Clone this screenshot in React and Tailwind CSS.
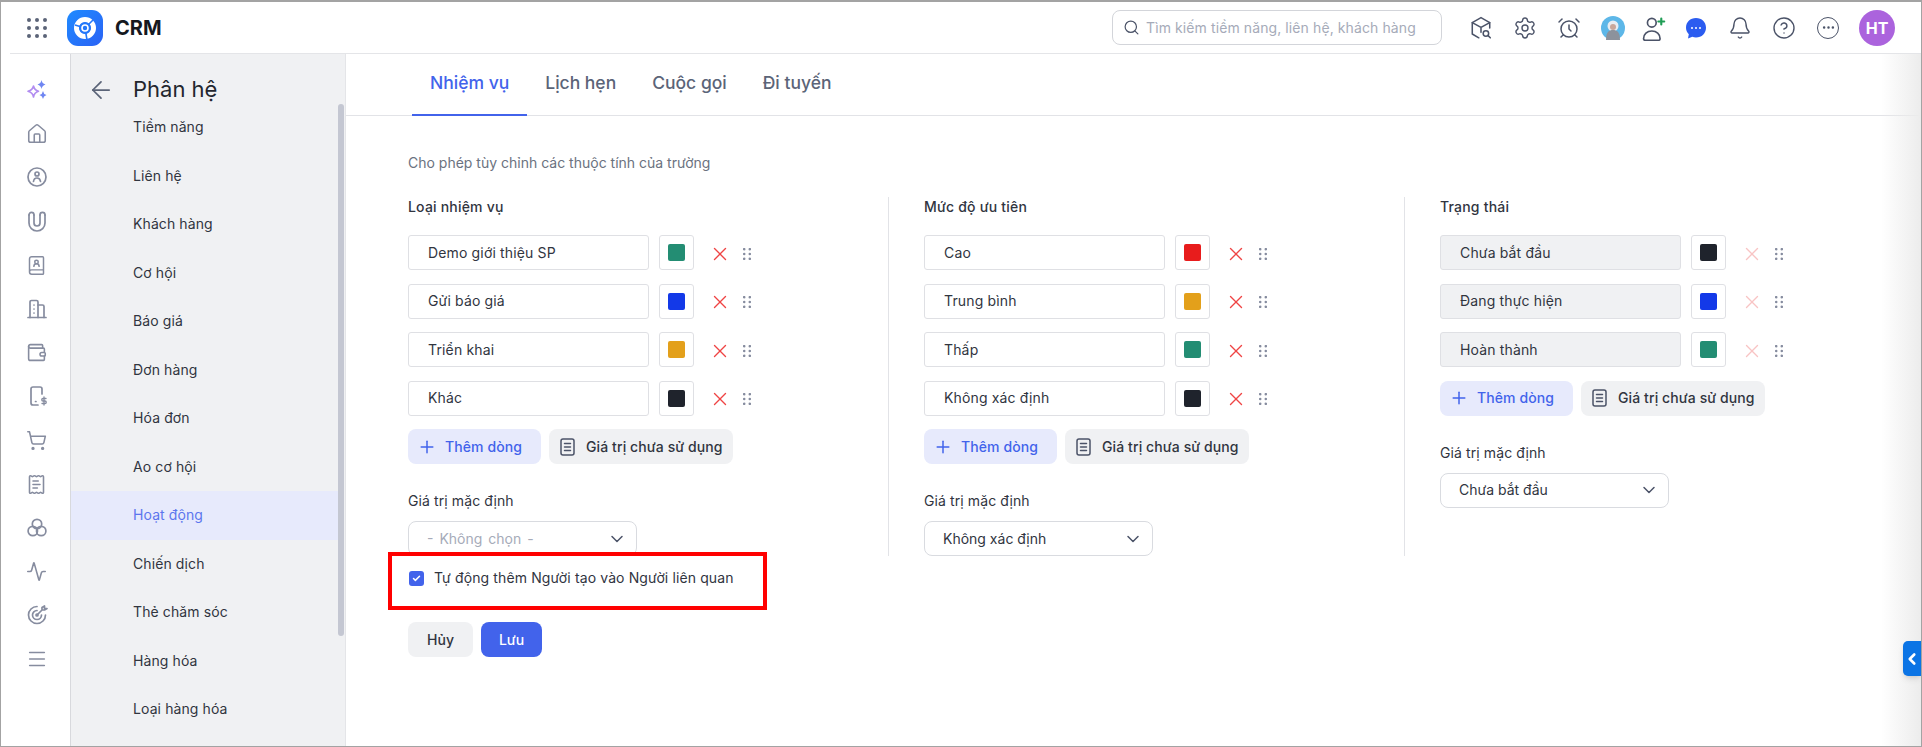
import React from "react";
import { House, Wallet, ShoppingCart, ReceiptText, Activity, Menu, Settings, AlarmClock, Bell, CircleHelp, Ellipsis, Search, ArrowLeft, X, Plus, ChevronDown, ChevronLeft, Check, BookUser } from "lucide-react";

const FONT = "font-['Inter','Noto_Sans',sans-serif]";

function Sparkles() {
  return (
    <svg width="22" height="22" viewBox="0 0 22 22">
      <path d="M7.500 7 Q8.300 11 12.500 12.200 Q8.300 13.400 7.500 18 Q6.700 13.400 2 12.200 Q6.700 11 7.500 7Z" fill="none" stroke="#b18cf0" strokeWidth="1.600" strokeLinejoin="round" />
      <path d="M15.500 1 Q16 4.500 19.500 5.500 Q16 6.500 15.500 10 Q15 6.500 11.500 5.500 Q15 4.500 15.500 1Z" fill="#6f86f2" />
      <path d="M17 12 Q17.400 15 20.500 16 Q17.400 17 17 20 Q16.600 17 13.500 16 Q16.600 15 17 12Z" fill="#6f86f2" />
    </svg>
  );
}

function RailSvg({ children }) {
  return (
    <svg width="22" height="22" viewBox="0 0 22 22" fill="none" stroke="#868c9f" strokeWidth="1.700" strokeLinecap="round" strokeLinejoin="round">
      {children}
    </svg>
  );
}

const railIcons = [
  <Sparkles key="s" />,
  <House key="h" size={22} color="#868c9f" strokeWidth={1.7} />,
  <RailSvg key="c"><circle cx="11" cy="11" r="9" /><circle cx="11" cy="8" r="2" /><path d="M7.500 15.500c.3-2.500 1.700-3.500 3.500-3.500s3.200 1 3.500 3.500" /></RailSvg>,
  <RailSvg key="m"><path d="M3 5v8a8 8 0 0 0 16 0V5" /><path d="M8 5v8a3 3 0 0 0 6 0V5" /><path d="M8 5c0-3.500-5-3.500-5 0M19 5c0-3.500-5-3.500-5 0" /></RailSvg>,
  <BookUser key="b" size={21} color="#868c9f" strokeWidth={1.7} />,
  <RailSvg key="bd"><path d="M2 19.500h18" /><path d="M4 19.500V4a1.500 1.500 0 0 1 1.500-1.500h5A1.500 1.500 0 0 1 12 4v15.500" /><path d="M12 7h4.500A1.500 1.500 0 0 1 18 8.500v11" /><path d="M8 7h.01M8 11h.01M8 15h.01" /></RailSvg>,
  <Wallet key="w" size={21} color="#868c9f" strokeWidth={1.8} />,
  <RailSvg key="p"><path d="M12 20H7a2 2 0 0 1-2-2V4a2 2 0 0 1 2-2h7a2 2 0 0 1 2 2v5" /><path d="M9.500 16.500h.5" /><path d="M18 12v8M20 13.500h-3a1 1 0 0 0 0 2.500h2a1 1 0 0 1 0 2.500h-3" strokeWidth="1.300" /></RailSvg>,
  <ShoppingCart key="sc" size={21} color="#868c9f" strokeWidth={1.8} />,
  <ReceiptText key="r" size={21} color="#868c9f" strokeWidth={1.8} />,
  <RailSvg key="t"><circle cx="11" cy="7" r="4.700" /><circle cx="6.800" cy="14" r="4.700" /><circle cx="15.200" cy="14" r="4.700" /></RailSvg>,
  <Activity key="a" size={21} color="#868c9f" strokeWidth={1.8} />,
  <RailSvg key="g"><path d="M11 2.500a8.500 8.500 0 1 0 8.500 8.500" /><path d="M11 6.500a4.500 4.500 0 1 0 4.500 4.500" /><circle cx="11" cy="11" r="1" /><path d="M11 11l5-5M16 6V3.500l2.500-1.500V4.500H21L18.500 6H16" /></RailSvg>,
  <Menu key="mn" size={22} color="#868c9f" strokeWidth={1.7} />,
];

const modules = ["Tiềm năng", "Liên hệ", "Khách hàng", "Cơ hội", "Báo giá", "Đơn hàng", "Hóa đơn", "Ao cơ hội", "Hoạt động", "Chiến dịch", "Thẻ chăm sóc", "Hàng hóa", "Loại hàng hóa"];

const GREEN = "bg-[#238d73]";
const BLUE = "bg-[#1339e8]";
const AMBER = "bg-[#e3a01b]";
const DARK = "bg-[#1f232c]";

function Dots() {
  return (
    <svg width="8" height="12" viewBox="0 0 8 12" fill="#868c9f">
      {[1.2, 6, 10.800].map((y) => [1.2, 6.800].map((x) => <circle key={`${x}-${y}`} cx={x} cy={y} r="1.300" />))}
    </svg>
  );
}

function DocIcon() {
  return (
    <svg width="15" height="18" viewBox="0 0 15 18" fill="none" stroke="#4b5368" strokeWidth="1.500" strokeLinecap="round">
      <rect x="1" y="1" width="13" height="16" rx="2" />
      <path d="M4.500 5.500h6M4.500 9h6M4.500 12.500h6" />
    </svg>
  );
}

function Row({ label, color, locked }) {
  return (
    <div className="flex items-center h-[35px] mb-[13.5px]">
      <div className={`w-[241px] h-full rounded-[3px] border border-[#dfe0e4] pl-[19px] flex items-center text-sm tracking-[0.15px] text-[#31353f] ${locked ? "bg-[#f0f1f3]" : "bg-white"}`}>
        {label}
      </div>
      <div className="w-[35px] h-full ml-[10px] rounded-[3px] border border-[#dfe0e4] bg-white flex items-center justify-center">
        <span className={`block w-[17px] h-[17px] rounded-[2px] ${color}`} />
      </div>
      <X size={22} strokeWidth={1.5} className={`ml-[15px] mt-0.5 ${locked ? "text-[#f8c4c4]" : "text-[#ef4444]"}`} />
      <span className="ml-3 mt-0.5 flex"><Dots /></span>
    </div>
  );
}

function ColumnBody({ title, rows, value, placeholder, locked }) {
  return (
    <>
      <div className="h-5 leading-5 text-sm tracking-[0.2px] font-medium text-[#31353f] mb-[18px]">{title}</div>
      {rows.map(([l, c]) => <Row key={l} label={l} color={c} locked={locked} />)}
      <div className="flex gap-2 text-sm tracking-[0.1px]">
        <button className="w-[133px] h-[35px] rounded-lg bg-[#e7eafc] text-[#4263eb] font-medium flex items-center pl-[9px]">
          <Plus size={20} strokeWidth={1.8} />
          <span className="ml-2">Thêm dòng</span>
        </button>
        <button className="w-[184px] h-[35px] rounded-lg bg-[#f0f1f3] text-[#31353f] font-medium flex items-center pl-[11px]">
          <DocIcon />
          <span className="ml-[11px]">Giá trị chưa sử dụng</span>
        </button>
      </div>
      <div className="mt-[27px] h-5 leading-5 text-sm tracking-[0.1px] text-[#31353f]">Giá trị mặc định</div>
      <div className="mt-[10px] w-[229px] h-[35px] rounded-lg border border-[#d9dbe0] bg-white flex items-center justify-between pl-[18px] pr-[9px] text-sm">
        <span className={placeholder ? "text-[#a6abb9] [word-spacing:2px]" : "text-[#31353f]"}>{value}</span>
        <ChevronDown size={20} strokeWidth={1.8} className="text-[#4b5368]" />
      </div>
    </>
  );
}

function Logo() {
  return (
    <svg width="36" height="36" viewBox="0 0 36 36">
      <defs>
        <linearGradient id="lg" x1="0" y1="0" x2="1" y2="1">
          <stop offset="0" stopColor="#1f8bff" />
          <stop offset="1" stopColor="#2a62f5" />
        </linearGradient>
      </defs>
      <rect width="36" height="36" rx="11" fill="url(#lg)" />
      <circle cx="18" cy="18" r="8.500" fill="none" stroke="white" strokeWidth="5" />
      <path d="M18 18L26 10M18 18L8 15M18 18L20 30" stroke="#2478fa" strokeWidth="1.600" />
      <circle cx="18" cy="18" r="5.800" fill="#2478fa" />
      <circle cx="18" cy="18" r="3" fill="none" stroke="white" strokeWidth="1.600" />
    </svg>
  );
}

function TopSvg({ children, size = 24 }) {
  return (
    <svg width={size} height={size} viewBox="0 0 22 22" fill="none" stroke="#4b5368" strokeWidth="1.400" strokeLinecap="round" strokeLinejoin="round">
      {children}
    </svg>
  );
}

const topIcons = [
  <TopSvg key="box"><path d="M9 20l-6-3.500V6l8-4.500L19 6v5" /><path d="M3 6l8 4.500L19 6M11 10.500V15" /><circle cx="15.500" cy="16" r="2.500" /><path d="M17.500 18l2 2" /></TopSvg>,
  <Settings key="set" size={24} color="#4b5368" strokeWidth={1.4} />,
  <AlarmClock key="al" size={24} color="#4b5368" strokeWidth={1.5} />,
  <svg key="av" width="24" height="24" viewBox="0 0 24 24">
    <circle cx="12" cy="12" r="12" fill="#5db7e8" />
    <circle cx="12" cy="10" r="5.500" fill="#e8edf2" />
    <circle cx="12" cy="11" r="3" fill="#c9a79a" />
    <path d="M5 24c0-8 3-10 7-10s7 2 7 10Z" fill="#8c929c" />
  </svg>,
  <TopSvg key="up" size={26}><circle cx="10" cy="6.500" r="3.700" /><path d="M3 20c0-4 3-6.500 7-6.500s7 2.500 7 6.500c0 1-1 1.500-2 1.500H5c-1 0-2-.5-2-1.500Z" /><path d="M18 3v5M15.500 5.500h5" stroke="#1f9d55" strokeWidth="1.800" /></TopSvg>,
  <svg key="ch" width="24" height="24" viewBox="0 0 24 24">
    <path d="M12 2c5.800 0 10 4.200 10 9.700s-4.200 9.800-10 9.800c-1.300 0-2.600-.2-3.700-.7L4 22.500l.8-4.300C3 16.500 2 14.200 2 11.700 2 6.200 6.200 2 12 2Z" fill="#2b5cf0" />
    <circle cx="8" cy="12" r="1" fill="white" /><circle cx="12" cy="12" r="1" fill="white" /><circle cx="16" cy="12" r="1" fill="white" />
  </svg>,
  <Bell key="be" size={24} color="#4b5368" strokeWidth={1.4} />,
  <CircleHelp key="he" size={24} color="#4b5368" strokeWidth={1.4} />,
  <div key="mo" className="w-[22px] h-[22px] rounded-full border-[1.5px] border-[#4b5368] flex items-center justify-center">
    <Ellipsis size={15} color="#4b5368" strokeWidth={2} />
  </div>,
];

export default function App() {
  return (
    <div className={`${FONT} w-[1922px] h-[747px] bg-white border border-[#a3a3a3] border-t-2 flex flex-col overflow-hidden relative`}>
      <header className="h-[52px] shrink-0 ml-[9px] border-b border-[#e4e5e8] flex items-center">
        <svg width="20" height="20" viewBox="0 0 20 20" fill="#5b6478" className="ml-[17px]">
          {[2, 10, 18].map((y) => [2, 10, 18].map((x) => <circle key={`${x}-${y}`} cx={x} cy={y} r="2" />))}
        </svg>
        <span className="ml-5 flex"><Logo /></span>
        <span className="ml-3 text-xl font-bold text-[#15181f]">CRM</span>
        <div className="ml-auto w-[330px] h-[35px] rounded-lg border border-[#d3d5da] flex items-center pl-[10px] text-sm tracking-[0.1px] text-[#a6abb9]">
          <Search size={17} color="#4b5368" strokeWidth={1.7} />
          <span className="ml-[6px]">Tìm kiếm tiềm năng, liên hệ, khách hàng</span>
        </div>
        <div className="flex items-center ml-[17px]">
          {topIcons.map((ic, i) => (
            <div key={i} className={`w-[44px] flex justify-center ${i === 4 ? "-ml-1" : ""} ${i === 5 ? "-ml-px" : ""}`}>{ic}</div>
          ))}
        </div>
        <div className="ml-[9px] mr-[26px] w-9 h-9 rounded-full bg-[#ab63dd] text-white font-bold text-base flex items-center justify-center">HT</div>
      </header>

      <div className="flex flex-1 min-h-0">
        <nav className="w-[70px] shrink-0 border-r border-[#d8d9dd] flex flex-col items-center pt-[14px] pl-0.5">
          {railIcons.map((ic, i) => (
            <div key={i} className="h-[43.8px] w-full flex items-center justify-center">{ic}</div>
          ))}
        </nav>

        <aside className="w-[275px] shrink-0 bg-[#f0f1f3] flex flex-col overflow-hidden border-r border-[#e4e5e8]">
          <div className="h-[49px] shrink-0 flex items-center pt-[22px] pl-[16px]">
            <ArrowLeft size={28} color="#5b6478" strokeWidth={1.5} />
            <span className="ml-[18px] text-[22px] text-[#23262e]">Phân hệ</span>
          </div>
          <div className="flex flex-1 min-h-0">
            <div className="flex-1 min-w-0">
              {modules.map((m) => (
                <div key={m} className={`h-[48.5px] pl-[62px] flex items-center text-sm tracking-[0.1px] ${m === "Hoạt động" ? "bg-[#e7eafc] text-[#5c76ee]" : "text-[#31353f]"}`}>
                  {m}
                </div>
              ))}
            </div>
            <div className="w-[6px] mr-px pt-px">
              <div className="w-[6px] h-[532px] rounded-[3px] bg-[#c4c7d2]" />
            </div>
          </div>
        </aside>

        <main className="flex-1 min-w-0 relative">
          <div className="h-[62px] border-b border-[#e2e3e7] flex pl-[66px] text-[17.5px] font-medium">
            {["Nhiệm vụ", "Lịch hẹn", "Cuộc gọi", "Đi tuyến"].map((t, i) => (
              <div key={t} className={`h-[62px] px-[18px] pb-[2px] flex items-center ${i === 0 ? "text-[#4263eb] border-b-2 border-[#4263eb]" : "text-[#5b6478] border-b-2 border-transparent"}`}>
                {t}
              </div>
            ))}
          </div>
          <div className="pl-[62px]">
            <p className="mt-[37px] h-5 leading-5 text-sm text-[#6b7280] mb-[24px]">Cho phép tùy chỉnh các thuộc tính của trường</p>
            <div className="flex">
              <section className="w-[481px] border-r border-[#e2e3e7] mr-[35px]">
                <ColumnBody title="Loại nhiệm vụ" value="- Không chọn -" placeholder rows={[["Demo giới thiệu SP", GREEN], ["Gửi báo giá", BLUE], ["Triển khai", AMBER], ["Khác", DARK]]} />
              </section>
              <section className="w-[481px] border-r border-[#e2e3e7] mr-[35px]">
                <ColumnBody title="Mức độ ưu tiên" value="Không xác định" rows={[["Cao", "bg-[#e81c1c]"], ["Trung bình", AMBER], ["Thấp", GREEN], ["Không xác định", DARK]]} />
              </section>
              <section className="w-[400px]">
                <ColumnBody title="Trạng thái" value="Chưa bắt đầu" locked rows={[["Chưa bắt đầu", DARK], ["Đang thực hiện", BLUE], ["Hoàn thành", GREEN]]} />
              </section>
            </div>
            <div className="relative mt-[14px] h-[16px] flex items-center text-sm tracking-[0.12px] text-[#31353f]">
              <span className="w-[15px] h-[15px] ml-px rounded-[3px] bg-[#4263eb] flex items-center justify-center">
                <Check size={9} color="white" strokeWidth={4} />
              </span>
              <span className="ml-[10px]">Tự động thêm Người tạo vào Người liên quan</span>
              <div className="absolute left-[-20px] top-[-18px] w-[379px] h-[58px] border-4 border-[#ff0000]" />
            </div>
            <div className="flex gap-2 mt-[36px] text-sm font-medium">
              <button className="w-[65px] h-[35px] rounded-lg bg-[#f0f1f3] text-[#31353f]">Hủy</button>
              <button className="w-[61px] h-[35px] rounded-lg bg-[#4263eb] text-white">Lưu</button>
            </div>
          </div>
          <div className="absolute top-0 bottom-0 right-0 w-10 bg-gradient-to-r from-transparent to-[#ececec]" />
          <div className="absolute right-0 top-[587px] w-[18px] h-[35px] rounded-l-[5px] bg-[#0b74e5] flex items-center justify-center shadow-md">
            <ChevronLeft size={20} color="white" strokeWidth={3.5} />
          </div>
        </main>
      </div>
    </div>
  );
}
